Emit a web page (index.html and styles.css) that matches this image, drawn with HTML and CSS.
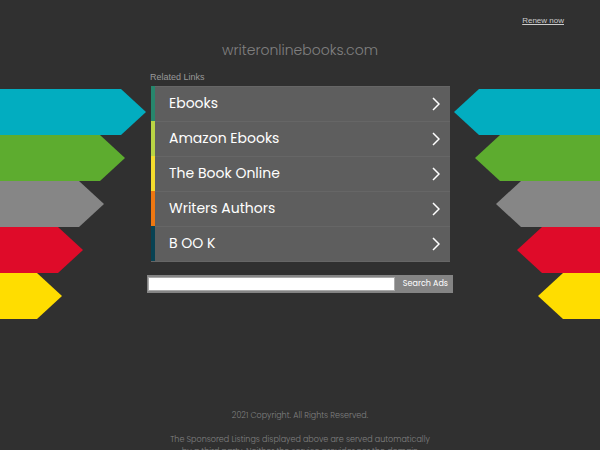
FILE: index.html
```
<!DOCTYPE html>
<html lang="en">
<head>
    <meta charset="UTF-8">
    <meta name="viewport" content="width=device-width, initial-scale=1.0">
    <title>writeronlinebooks.com</title>
    <link rel="stylesheet" href="styles.css">
</head>
<body>

<header>
    <a class="renew" href="#">Renew now</a>
    <h1>writeronlinebooks.com</h1>
</header>

<div class="columns">
    <div class="arrows left">
        <div class="arrow blue"></div>
        <div class="arrow green"></div>
        <div class="arrow gray"></div>
        <div class="arrow red"></div>
        <div class="arrow yellow"></div>
    </div>

    <main>
        <h2>Related Links</h2>
        <ul class="links">
            <li><a class="teal" href="#">Ebooks <svg viewBox="0 0 8 14"><path d="M1 1l6 6-6 6"/></svg></a></li>
            <li><a class="lime" href="#">Amazon Ebooks <svg viewBox="0 0 8 14"><path d="M1 1l6 6-6 6"/></svg></a></li>
            <li><a class="gold" href="#">The Book Online <svg viewBox="0 0 8 14"><path d="M1 1l6 6-6 6"/></svg></a></li>
            <li><a class="orange" href="#">Writers Authors <svg viewBox="0 0 8 14"><path d="M1 1l6 6-6 6"/></svg></a></li>
            <li><a class="navy" href="#">B OO K <svg viewBox="0 0 8 14"><path d="M1 1l6 6-6 6"/></svg></a></li>
        </ul>

        <form class="search">
            <input type="text" name="q" aria-label="Search Ads">
            <button type="submit">Search Ads</button>
        </form>
    </main>

    <div class="arrows right">
        <div class="arrow blue"></div>
        <div class="arrow green"></div>
        <div class="arrow gray"></div>
        <div class="arrow red"></div>
        <div class="arrow yellow"></div>
    </div>
</div>

<footer>
    <p>2021 Copyright. All Rights Reserved.</p>
    <p>The Sponsored Listings displayed above are served automatically by a third party. Neither the service provider nor the domain</p>
</footer>

</body>
</html>
```
FILE: styles.css
```
body {
    font-family: Poppins, 'Inter', sans-serif;
    background-color: #303030;
    margin: 0;
}

header {
    display: flex;
    flex-direction: column;
    padding: 14px 36px 0;
}

.renew {
    align-self: flex-end;
    color: #ccc;
    font-family: 'Liberation Sans', sans-serif;
    font-size: 8px;
    line-height: 14px;
}

h1 {
    margin: 12px 0 10px;
    color: #808080;
    font-size: 14px;
    font-weight: 300;
    line-height: 20px;
    text-align: center;
}

.columns {
    display: grid;
    grid-template-columns: 1fr 306px 1fr;
}

/* Signpost arrows on both sides */
.arrows {
    display: flex;
    flex-direction: column;
    padding-top: 19px;
}

.arrow {
    height: 46px;
    clip-path: polygon(0 0, calc(100% - 25px) 0, 100% 50%, calc(100% - 25px) 100%, 0 100%);
}

.right {
    transform: scaleX(-1);
}

.blue {
    background-color: #02adc0;
    margin-right: 1px;
}

.green {
    background-color: #5dac2f;
    margin-right: 22px;
}

.gray {
    background-color: #868686;
    margin-right: 43px;
}

.red {
    background-color: #df0b29;
    margin-right: 64px;
}

.yellow {
    background-color: #ffdd00;
    margin-right: 85px;
}

h2 {
    margin: 0 3px 2px;
    color: #999;
    font-family: 'Liberation Sans', sans-serif;
    font-size: 9px;
    font-weight: normal;
    line-height: 14px;
}

.links {
    list-style: none;
    margin: 0 3px 0 4px;
    padding: 0;
    background-color: #5e5e5e;
    border-bottom: 1px solid #666;
}

.links a {
    display: flex;
    align-items: center;
    justify-content: space-between;
    height: 35px;
    box-sizing: border-box;
    padding: 0 10px 0 14px;
    border-left: 4px solid;
    box-shadow: inset 0 1px #666;
    color: #fff;
    font-size: 14px;
    text-decoration: none;
}

.links svg {
    width: 8px;
    height: 14px;
    fill: none;
    stroke: #fff;
    stroke-width: 1.5;
}

.links .teal {
    border-left-color: #27866c;
}

.links .lime {
    border-left-color: #b9d444;
}

.links .gold {
    border-left-color: #f5dc2d;
}

.links .orange {
    border-left-color: #ee7711;
}

.links .navy {
    border-left-color: #084253;
}

.search {
    display: flex;
    align-items: center;
    height: 18px;
    margin-top: 13px;
    padding-left: 1px;
    background-color: #848484;
}

.search input {
    flex: 1;
    min-width: 0;
    height: 14px;
    box-sizing: border-box;
    padding: 0 2px;
    border: 1px solid #aaa;
    background-color: #fff;
    font-size: 9px;
}

.search button {
    width: 58px;
    padding: 0 5px 0 0;
    border: none;
    background: none;
    color: #fff;
    font-family: inherit;
    font-size: 8px;
    line-height: 18px;
    text-align: right;
    white-space: nowrap;
    cursor: pointer;
}

footer {
    width: 260px;
    margin: 91px auto 0;
    color: #808080;
    font-size: 8px;
    font-weight: 300;
    line-height: 12px;
    text-align: center;
}

footer p {
    margin: 0 0 12px;
}
```
